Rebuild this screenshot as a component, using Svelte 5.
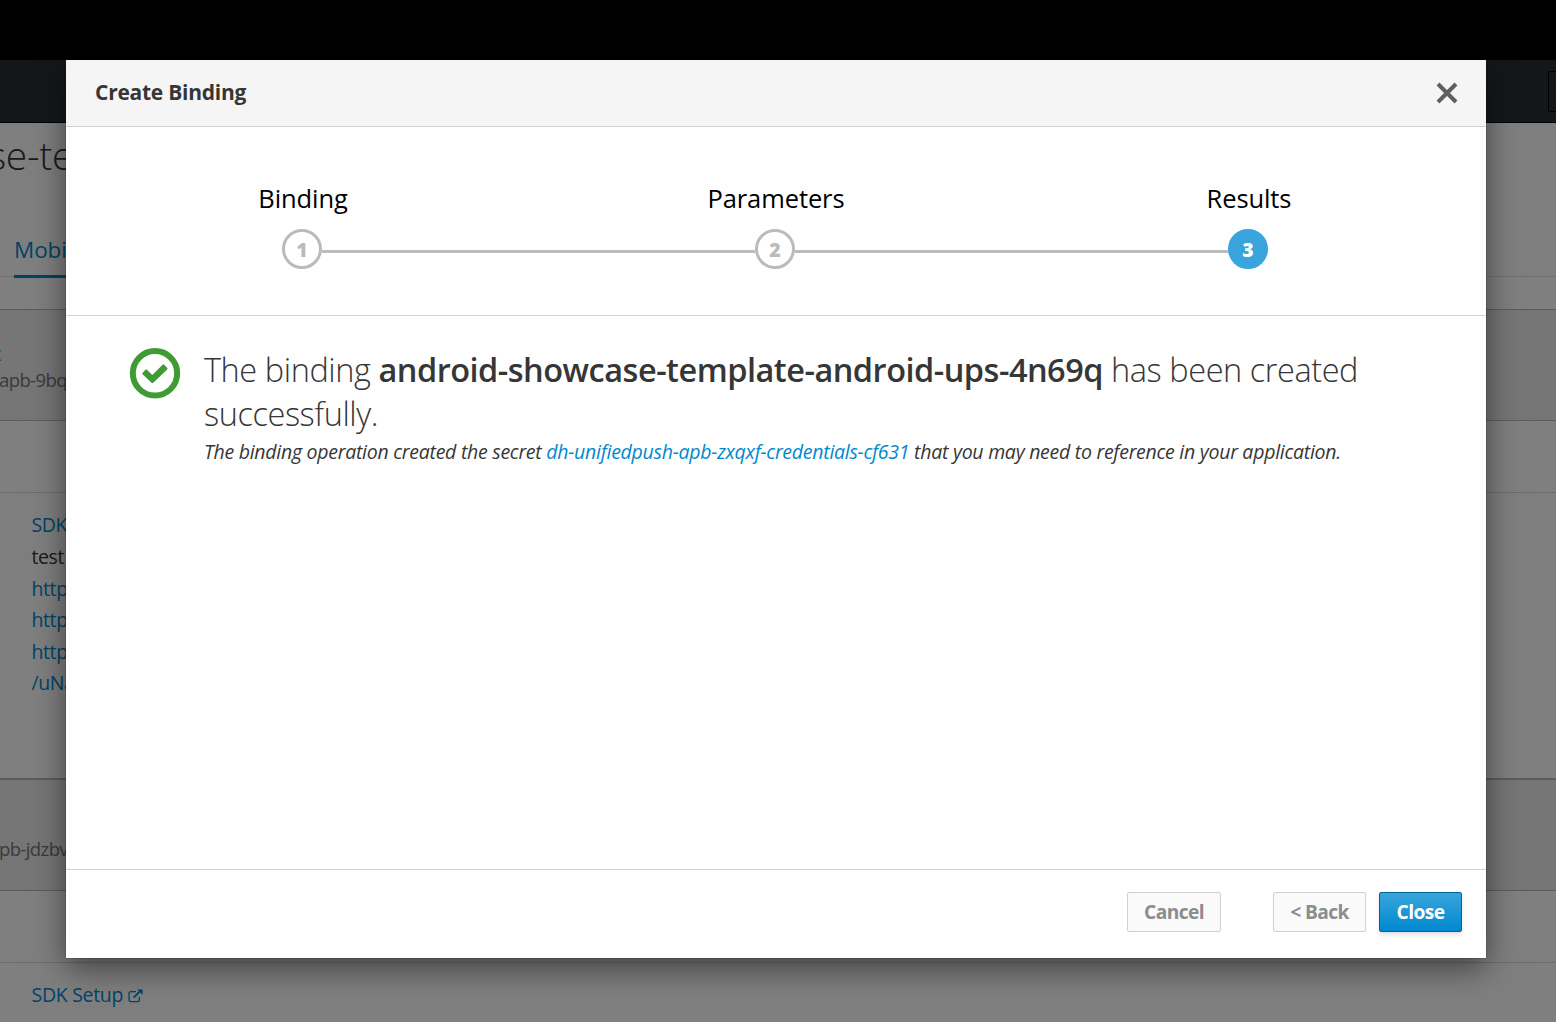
<script>
  const steps = [
    { n: 1, label: 'Binding' },
    { n: 2, label: 'Parameters' },
    { n: 3, label: 'Results', active: true }
  ];
  const links = ['http', 'http', 'http', '/uNa'];
</script>

<div class="screen">
  <div class="page">
    <div class="navbar"><div class="navbtn"></div></div>
    <div class="title">se-te</div>
    <div class="tabs"><div class="tab">Mobi</div></div>
    <div class="band first">
      <div class="band-link">t</div>
      <div class="band-sub">apb-9bq</div>
    </div>
    <div class="spacer"></div>
    <div class="details">
      <div class="link">SDK</div>
      <div>test</div>
      {#each links as l}
        <div class="link">{l}</div>
      {/each}
    </div>
    <div class="band second">
      <div class="band-sub">pb-jdzbv</div>
    </div>
    <div class="spacer"></div>
    <div class="setup">
      <span>SDK Setup</span>
      <svg width="15" height="14" viewBox="0 0 15 14" fill="none">
        <path d="M8 2.6H3Q1 2.6 1 4.6V10.6Q1 12.6 3 12.6H9.4Q11.4 12.6 11.4 10.6V8" stroke="currentColor" stroke-width="1.3" />
        <path d="M5.6 8.6L12 2.4" stroke="currentColor" stroke-width="1.9" />
        <path d="M9.2 0.4H14.6V5.8Z" fill="currentColor" />
      </svg>
    </div>
  </div>
  <div class="backdrop"></div>

  <div class="modal">
    <header>
      <h4>Create Binding</h4>
      <svg class="x" width="22" height="22" viewBox="0 0 22 22"><path d="M2 2L20 20M20 2L2 20" stroke="#5f5f5f" stroke-width="4" /></svg>
    </header>
    <div class="wizard">
      {#each steps as s}
        <div class="step">
          <div class="label">{s.label}</div>
          <div class="rail"><div class="num" class:active={s.active}>{s.n}</div></div>
        </div>
      {/each}
    </div>
    <main>
      <svg class="ok" width="52" height="52" viewBox="0 0 52 52">
        <circle cx="26" cy="26.3" r="22.2" fill="none" stroke="#3f9c35" stroke-width="6" />
        <path d="M13.5 25.9L16.4 22.7Q17.2 22 18 22.7L23.3 27.9L33.6 17.8Q34.4 17.1 35.2 17.8L38.2 20.8Q38.9 21.6 38.2 22.4L24.3 35.8Q23.4 36.6 22.5 35.8L13.5 27.2Q12.9 26.5 13.5 25.9Z" fill="#3f9c35" />
      </svg>
      <div class="result">
        <h3>The binding <strong>android-showcase-template-android-ups-4n69q</strong> has been created<br />successfully.</h3>
        <p>The binding operation created the secret <a>dh-unifiedpush-apb-zxqxf-credentials-cf631</a> that you may need to reference in your application.</p>
      </div>
    </main>
    <footer>
      <button class="cancel">Cancel</button>
      <button class="back">&lt; Back</button>
      <button class="primary">Close</button>
    </footer>
  </div>
</div>

<style>
  :global(body) { background: #000; overflow: hidden; }
  * { box-sizing: border-box; }
  .screen {
    position: relative; width: 1556px; height: 1022px; padding-top: 60px; overflow: hidden;
    background: #000; color: #363636; font-family: 'Open Sans', sans-serif;
  }
  .page { height: 962px; background: #fff; overflow: hidden; white-space: nowrap; }
  .navbar { height: 63px; background: #282e34; border-bottom: 1px solid #050505; display: flex; justify-content: flex-end; padding-top: 11px; }
  .navbtn { width: 8px; height: 41px; border: 1px solid #000; border-right: 0; border-radius: 2px 0 0 2px; }
  .title { height: 94px; padding-top: 5px; margin-left: -12px; font-size: 39px; line-height: 54px; font-weight: 300; letter-spacing: -0.3px; }
  .tabs { height: 60px; border-bottom: 1px solid #e2e2e2; padding-left: 14px; }
  .tab { width: 120px; height: 61px; padding-top: 16px; font-size: 22.5px; letter-spacing: -0.1px; line-height: 34px; color: #0088ce; border-bottom: 3px solid #0088ce; }
  .band { background: #ececec; border: 0 solid #b8b8b8; border-bottom-width: 1px; height: 112px; line-height: 26px; font-size: 18.5px; letter-spacing: -0.6px; color: #72767b; }
  .first { margin-top: 32px; border-top-width: 1px; padding-top: 31px; }
  .second { height: 113px; border-top-width: 2px; padding-top: 56px; }
  .band-link { color: #0088ce; font-size: 20px; margin-left: -6px; }
  .band-sub { margin-left: -1px; }
  .spacer { height: 72px; border-bottom: 1px solid #d8d8d8; }
  .details { height: 285px; padding: 16.4px 0 0 31.5px; font-size: 19.5px; letter-spacing: -0.4px; line-height: 31.6px; }
  .link, .setup { color: #0088ce; }
  .setup { display: flex; gap: 5px; align-items: center; padding: 16px 0 0 31.5px; font-size: 19.5px; letter-spacing: -0.3px; line-height: 32px; }
  .setup svg { margin-top: 1px; }
  .backdrop { position: absolute; inset: 0; background: rgba(0, 0, 0, 0.5); }
  .modal {
    position: absolute; left: 66px; top: 60px; width: 1420px; height: 898px;
    display: flex; flex-direction: column; background: #fff;
    box-shadow: 0 10px 30px rgba(0, 0, 0, 0.5), 0 0 1px rgba(0, 0, 0, 0.5);
  }
  header { height: 67px; display: flex; align-items: center; justify-content: space-between; padding: 0 28px 1px 29px; background: #f5f5f5; border-bottom: 1px solid #d1d1d1; }
  h4 { margin: -2px 0 0; font-size: 21px; letter-spacing: -0.25px; font-weight: 700; line-height: 28px; }
  .wizard { height: 189px; border-bottom: 1px solid #d1d1d1; display: flex; justify-content: center; padding-top: 51px; color: #000; }
  .step { width: 473px; text-align: center; }
  .label { font-size: 25.5px; letter-spacing: -0.1px; line-height: 40px; height: 51px; }
  .rail { display: flex; justify-content: center; align-items: center; height: 40px; margin: 0 1px 0 -1px; }
  .rail::before, .rail::after { content: ''; flex: 1; height: 3px; margin-top: 5px; background: #bbb; }
  .step:first-child .rail::before, .step:last-child .rail::after { background: none; }
  .num { width: 40px; height: 40px; border: 3px solid #bbb; border-radius: 50%; color: #bbb; font-size: 19.5px; font-weight: 800; line-height: 36px; }
  .num.active { background: #39a5dc; border-color: #39a5dc; color: #fff; }
  main { height: 554px; border-bottom: 1px solid #d1d1d1; display: flex; gap: 23px; padding: 31px 0 0 63px; white-space: nowrap; }
  h3 { margin: 1px 0 0; font-size: 32.5px; letter-spacing: -0.43px; line-height: 44px; font-weight: 300; }
  h3 strong { font-weight: 600; letter-spacing: -0.5px; }
  p { margin: 0; font-size: 19.5px; letter-spacing: -0.265px; line-height: 32px; font-style: italic; }
  a { color: #0088ce; }
  footer { display: flex; justify-content: flex-end; padding: 22px 24px 0 0; }
  button { height: 40px; padding: 0 0 1px; font: 700 19.2px/36px 'Open Sans', sans-serif; letter-spacing: -0.6px; color: #8b8d8f; background: #fafafa; border: 1px solid #d1d1d1; border-radius: 2px; }
  .cancel { width: 94px; margin-right: 52px; }
  .back { width: 93px; margin-right: 13px; }
  .primary { width: 83px; color: #fff; background: linear-gradient(#39a5dc, #0088ce); border-color: #00659c; box-shadow: 0 3px 4px rgba(3, 3, 3, 0.12); }
</style>
